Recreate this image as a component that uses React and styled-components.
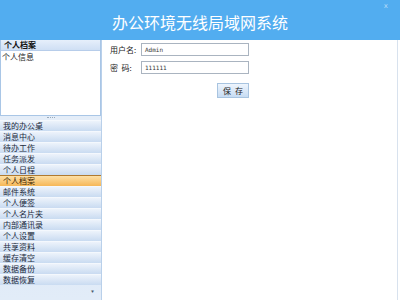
import React from "react";
import styled, { createGlobalStyle } from "styled-components";

const GlobalStyle = createGlobalStyle`
    html, body {
        margin: 0;
        padding: 0;
        background: #ffffff;
    }
    body {
        font-family: "Noto Sans CJK SC", "DejaVu Sans", sans-serif;
    }
`;

const menuItems = [
    "我的办公桌",
    "消息中心",
    "待办工作",
    "任务派发",
    "个人日程",
    "个人档案",
    "邮件系统",
    "个人便签",
    "个人名片夹",
    "内部通讯录",
    "个人设置",
    "共享资料",
    "缓存清空",
    "数据备份",
    "数据恢复",
];

const Page = styled.div`
    width: 400px;
    height: 300px;
    display: flex;
    flex-direction: column;
    overflow: hidden;
`;

const Header = styled.div`
    position: relative;
    height: 40px;
    background: #52adf0;
    display: flex;
    align-items: center;
    justify-content: center;
    color: #ffffff;
    font-size: 16px;
    padding-top: 3px;
    box-sizing: border-box;
`;

const Close = styled.span`
    position: absolute;
    top: 2px;
    right: 12px;
    font-size: 7px;
    color: #b7dcf8;
    font-family: "DejaVu Sans", sans-serif;
`;

const Body = styled.div`
    flex: 1;
    display: flex;
    min-height: 0;
`;

const Sidebar = styled.div`
    width: 101px;
    display: flex;
    flex-direction: column;
    border-right: 1px solid #b9d0ea;
    background: #d8e6f6;
`;

const TopBox = styled.div`
    height: 75px;
    background: #ffffff;
    border: 1px solid #a9c6e6;
    border-top: none;
    display: flex;
    flex-direction: column;
`;

const BoxTitle = styled.div`
    height: 10px;
    line-height: 10px;
    padding-left: 3px;
    font-size: 8px;
    font-weight: bold;
    color: #111;
    background: linear-gradient(#e6effb, #cfdff4);
    border-bottom: 1px solid #b7cdea;
`;

const BoxItem = styled.div`
    font-size: 8px;
    line-height: 11px;
    color: #222;
    padding-left: 1px;
`;

const Splitter = styled.div`
    height: 4px;
    background: #e4edf8;
    display: flex;
    justify-content: center;
    align-items: center;
    &::after {
        content: "";
        width: 8px;
        height: 1px;
        border-top: 1px dotted #9ab;
    }
`;

const Menu = styled.div`
    flex: 1;
    display: flex;
    flex-direction: column;
    position: relative;
    background: linear-gradient(#d6e5f6, #e2ecf8);
`;

const MenuItem = styled.div`
    height: 10px;
    line-height: 10px;
    padding-left: 3px;
    font-size: 8px;
    color: ${(p) => (p.$active ? "#3a2200" : "#1b2a3c")};
    background: ${(p) =>
        p.$active
            ? "linear-gradient(#fde0a6, #f6b757)"
            : "linear-gradient(#edf3fb, #c9dbf1)"};
    border-top: 1px solid ${(p) => (p.$active ? "#b07a30" : "#f4f8fd")};
    border-bottom: ${(p) => (p.$active ? "1px solid #b07a30" : "none")};
    margin-bottom: ${(p) => (p.$active ? "-1px" : "0")};
    white-space: nowrap;
`;

const Arrow = styled.span`
    position: absolute;
    right: 7px;
    bottom: 6px;
    font-size: 3px;
    color: #4a5a70;
`;

const Content = styled.div`
    flex: 1;
    padding: 3px 0 0 8px;
    border-right: 1px solid #d8e2ee;
    margin-right: 2px;
`;

const Form = styled.div`
    display: flex;
    flex-direction: column;
    gap: 5px;
    width: 139px;
`;

const Row = styled.div`
    display: flex;
    align-items: center;
    height: 13px;
`;

const Label = styled.span`
    width: 31px;
    font-size: 8px;
    color: #222;
    white-space: pre;
`;

const Input = styled.div`
    width: 103px;
    height: 11px;
    border: 1px solid #aab4c0;
    background: #fff;
    font-family: "DejaVu Sans Mono", monospace;
    font-size: 6px;
    line-height: 11px;
    padding-left: 3px;
    color: #333;
`;

const Actions = styled.div`
    display: flex;
    justify-content: flex-end;
    margin-top: 4px;
`;

const SaveButton = styled.div`
    width: 30px;
    height: 13px;
    border: 1px solid #a8c4e0;
    background: linear-gradient(#eef5fd, #c7dcf3);
    font-size: 8px;
    line-height: 13px;
    text-align: center;
    color: #222;
    letter-spacing: 4px;
    text-indent: 4px;
`;

export default function App() {
    return (
        <Page>
            <GlobalStyle />
            <Header>
                办公环境无线局域网系统
                <Close>x</Close>
            </Header>
            <Body>
                <Sidebar>
                    <TopBox>
                        <BoxTitle>个人档案</BoxTitle>
                        <BoxItem>个人信息</BoxItem>
                    </TopBox>
                    <Splitter />
                    <Menu>
                        {menuItems.map((item) => (
                            <MenuItem key={item} $active={item === "个人档案"}>
                                {item}
                            </MenuItem>
                        ))}
                        <Arrow>▼</Arrow>
                    </Menu>
                </Sidebar>
                <Content>
                    <Form>
                        <Row>
                            <Label>用户名:</Label>
                            <Input>Admin</Input>
                        </Row>
                        <Row>
                            <Label>{"密  码:"}</Label>
                            <Input>111111</Input>
                        </Row>
                        <Actions>
                            <SaveButton>保存</SaveButton>
                        </Actions>
                    </Form>
                </Content>
            </Body>
        </Page>
    );
}
